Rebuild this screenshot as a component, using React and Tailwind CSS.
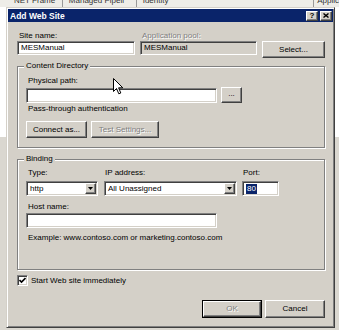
import React from "react";

const raised =
  "bg-[#d4d0c8] border border-t-white border-l-white border-r-[#404040] border-b-[#404040] shadow-[inset_-1px_-1px_0_#808080]";
const sunken =
  "border border-t-[#808080] border-l-[#808080] border-r-white border-b-white shadow-[inset_1px_1px_0_#404040,inset_-1px_-1px_0_#d4d0c8]";
const etched =
  "border border-[#808080] shadow-[1px_1px_0_#fff,inset_1px_1px_0_#fff]";
const dim = "text-[#808080] [text-shadow:1px_1px_0_#fff]";

const Btn = ({ children, disabled, className = "" }) => (
  <div
    className={`flex items-center justify-center ${raised} ${disabled ? dim : "text-black"} ${className}`}
  >
    {children}
  </div>
);

const TextBox = ({ children, disabled, className = "" }) => (
  <div
    className={`flex items-center pl-[3px] ${sunken} ${disabled ? "bg-[#d4d0c8]" : "bg-white"} ${className}`}
  >
    {children}
  </div>
);

const Combo = ({ value, className = "" }) => (
  <div className={`flex items-center bg-white p-[1px] ${sunken} ${className}`}>
    <span className="flex-1 pl-[2px]">{value}</span>
    <div className={`flex items-center justify-center w-[11px] h-full ${raised}`}>
      <svg width="5" height="3" viewBox="0 0 5 3">
        <path d="M0 0h5L2.5 3z" fill="#000" />
      </svg>
    </div>
  </div>
);

const Group = ({ title, className = "", children }) => (
  <div className={`relative flex flex-col px-[8px] ${etched} ${className}`}>
    <span className="absolute -top-[6px] left-[6px] bg-[#d4d0c8] px-[2px]">{title}</span>
    {children}
  </div>
);

const Dialog = () => (
  <div className="absolute left-[6px] top-[7px] w-[329px] h-[321px] flex flex-col p-[1px] bg-[#d4d0c8] border border-t-[#d4d0c8] border-l-[#d4d0c8] border-r-[#404040] border-b-[#404040] shadow-[inset_1px_1px_0_#fff,inset_-1px_-1px_0_#808080]">
    {/* title bar */}
    <div className="flex items-center justify-between h-[13px] bg-[#0a246a] pl-[2px] pr-[1px]">
      <span className="text-white font-bold text-[8.5px]">Add Web Site</span>
      <div className="flex gap-[2px]">
        <div className={`flex items-center justify-center w-[12px] h-[10px] ${raised} font-bold text-[8px] leading-[8px]`}>?</div>
        <div className={`flex items-center justify-center w-[12px] h-[10px] ${raised}`}>
          <svg width="6" height="5" viewBox="0 0 6 5">
            <path d="M0.5 0.5L5.5 4.5M5.5 0.5L0.5 4.5" stroke="#000" strokeWidth="1.4" />
          </svg>
        </div>
      </div>
    </div>

    <div className="flex flex-col pt-[9px] pl-[9px] pr-[8px]">
      {/* site name / app pool */}
      <div className="flex items-end gap-[5px]">
        <div className="flex flex-col w-[118px]">
          <span className="pl-[2px]">Site name:</span>
          <TextBox className="h-[14px] mb-[3px]">MESManual</TextBox>
        </div>
        <div className="flex flex-col w-[117px]">
          <span className={`pl-[2px] ${dim}`}>Application pool:</span>
          <TextBox disabled className="h-[14px] mb-[3px]">MESManual</TextBox>
        </div>
        <Btn className="w-[63px] h-[17px]">Select...</Btn>
      </div>

      {/* content directory */}
      <Group title="Content Directory" className="mt-[8px] h-[82px] pt-[9px]">
        <span className="pl-[2px]">Physical path:</span>
        <div className="flex items-center gap-[4px] mt-[1px]">
          <TextBox className="w-[191px] h-[15px]" />
          <Btn className="w-[21px] h-[16px] leading-[6px] pb-[3px]">...</Btn>
        </div>
        <span className="pl-[2px] mt-[1px]">Pass-through authentication</span>
        <div className="flex gap-[4px] mt-[7px]">
          <Btn className="w-[61px] h-[17px]">Connect as...</Btn>
          <Btn disabled className="w-[68px] h-[17px]">Test Settings...</Btn>
        </div>
      </Group>

      {/* binding */}
      <Group title="Binding" className="mt-[11px] h-[111px] pt-[8px]">
        <div className="flex gap-[6px]">
          <div className="flex flex-col w-[72px]">
            <span className="pl-[2px]">Type:</span>
            <Combo value="http" className="mt-[3px] h-[15px]" />
          </div>
          <div className="flex flex-col w-[133px]">
            <span className="pl-[1px]">IP address:</span>
            <Combo value="All Unassigned" className="mt-[3px] h-[15px]" />
          </div>
          <div className="flex flex-col w-[37px] -ml-[1px]">
            <span className="pl-[1px]">Port:</span>
            <TextBox className="mt-[3px] h-[15px] pl-[2px]">
              <span className="bg-[#0a246a] text-white px-[1px]">80</span>
            </TextBox>
          </div>
        </div>
        <span className="pl-[2px] mt-[6px]">Host name:</span>
        <TextBox className="w-[191px] h-[15px] mt-[1px]" />
        <span className="pl-[2px] mt-[5px]">Example: www.contoso.com or marketing.contoso.com</span>
      </Group>

      {/* start immediately */}
      <div className="flex items-center gap-[3px] mt-[5px]">
        <div className={`flex items-center justify-center w-[11px] h-[11px] bg-white ${sunken}`}>
          <svg width="7" height="7" viewBox="0 0 7 7">
            <path d="M0.5 3L2.5 5L6.5 1" stroke="#000" strokeWidth="1.6" fill="none" />
          </svg>
        </div>
        <span>Start Web site immediately</span>
      </div>

      {/* buttons */}
      <div className="flex justify-end gap-[3px] mt-[14px]">
        <div className="w-[60px] h-[18px] border border-black flex">
          <Btn disabled className="flex-1">OK</Btn>
        </div>
        <Btn className="w-[60px] h-[18px]">Cancel</Btn>
      </div>
    </div>
  </div>
);

export default function App() {
  return (
    <div className="relative w-[339px] h-[330px] overflow-hidden bg-white font-['Liberation_Sans',Arial,sans-serif] text-[8px] leading-[10px] text-black">
      {/* list view behind the dialog */}
      <div className="flex flex-col h-full">
        <div className="flex h-[7px] overflow-hidden bg-[#eeede8] text-[#333]">
          <div className="w-[63px] pl-[14px] -mt-[4px] border-r border-[#999]">NET Frame</div>
          <div className="w-[74px] pl-[6px] -mt-[4px] border-r border-[#999]">Managed Pipeli</div>
          <div className="w-[178px] pl-[6px] -mt-[4px] border-r border-[#999]">Identity</div>
          <div className="pl-[3px] -mt-[4px]">Applic</div>
        </div>
        <div className="h-[130px] bg-white" />
        <div className="flex-1 bg-[#dad7d0]" />
      </div>

      <Dialog />

      {/* mouse pointer */}
      <svg className="absolute left-[113px] top-[78px]" width="11" height="17" viewBox="0 0 11 17">
        <path d="M0.5 0.5V13.5L3.5 10.5L5.8 15.8L7.8 15L5.6 9.8H9.8Z" fill="#fff" stroke="#000" strokeWidth="1" />
      </svg>
    </div>
  );
}
